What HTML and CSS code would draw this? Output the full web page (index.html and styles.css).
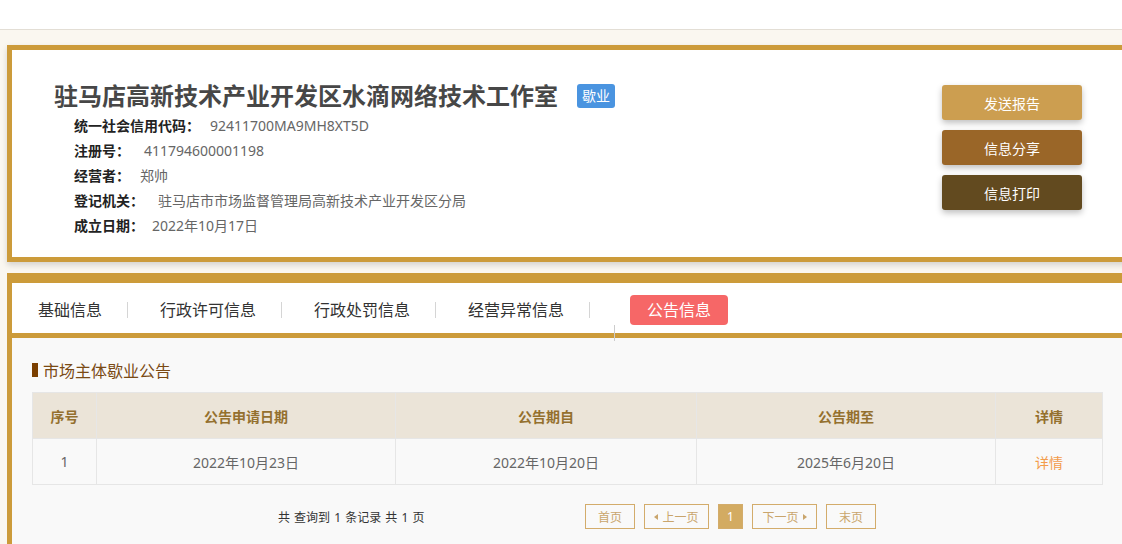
FILE: index.html
```html
<!DOCTYPE html>
<html lang="zh-CN">
<head>
  <meta charset="UTF-8">
  <meta name="viewport" content="width=device-width, initial-scale=1.0">
  <title>企业信息公示</title>
  <link rel="stylesheet" href="styles.css">
</head>
<body>
  <div class="topbar"></div>
  <div class="page">
    <div class="card info-card">
      <div class="info-main">
        <h1 class="company">驻马店高新技术产业开发区水滴网络技术工作室<span class="badge">歇业</span></h1>
        <ul class="facts">
          <li><b>统一社会信用代码：</b><span class="val">92411700MA9MH8XT5D</span></li>
          <li><b>注册号：</b><span class="val wide">411794600001198</span></li>
          <li><b>经营者：</b><span class="val">郑帅</span></li>
          <li><b>登记机关：</b><span class="val wide">驻马店市市场监督管理局高新技术产业开发区分局</span></li>
          <li><b>成立日期：</b><span class="val narrow">2022年10月17日</span></li>
        </ul>
      </div>
      <div class="actions">
        <button class="btn btn-send">发送报告</button>
        <button class="btn btn-share">信息分享</button>
        <button class="btn btn-print">信息打印</button>
      </div>
    </div>

    <div class="card detail-card">
      <div class="tabs">
        <a class="tab first">基础信息</a>
        <a class="tab">行政许可信息</a>
        <a class="tab">行政处罚信息</a>
        <a class="tab">经营异常信息</a>
        <a class="tab active">公告信息</a>
      </div>
      <div class="panel">
        <h2 class="section-title">市场主体歇业公告</h2>
        <table class="notice-table">
          <colgroup>
            <col style="width: 64px">
            <col style="width: 299px">
            <col style="width: 301px">
            <col style="width: 299px">
            <col style="width: 107px">
          </colgroup>
          <thead>
            <tr>
              <th>序号</th>
              <th>公告申请日期</th>
              <th>公告期自</th>
              <th>公告期至</th>
              <th>详情</th>
            </tr>
          </thead>
          <tbody>
            <tr>
              <td>1</td>
              <td>2022年10月23日</td>
              <td>2022年10月20日</td>
              <td>2025年6月20日</td>
              <td><a class="detail-link">详情</a></td>
            </tr>
          </tbody>
        </table>
        <div class="pager">
          <span class="pager-info">共 查询到 1 条记录 共 1 页</span>
          <div class="pager-links">
            <a class="page-btn w50">首页</a>
            <a class="page-btn w65"><i class="tri tri-left"></i>上一页</a>
            <a class="page-btn current">1</a>
            <a class="page-btn w65">下一页<i class="tri tri-right"></i></a>
            <a class="page-btn w50">末页</a>
          </div>
        </div>
      </div>
    </div>
  </div>
</body>
</html>
```

FILE: styles.css
```css
html, body {
  overflow: hidden;
}
body {
  margin: 0;
  font-family: "Noto Sans", "Noto Sans CJK SC", sans-serif;
  background-color: #faf7f0;
  color: #333;
}
.topbar {
  height: 29px;
  background-color: #fff;
  border-bottom: 1px solid #e3ded5;
}
.page {
  width: 1200px;
  margin-left: 7px;
  padding-top: 15px;
}
.card {
  box-sizing: border-box;
  border: 5px solid #cc9b3a;
}

/* fiche entreprise */
.info-card {
  display: flex;
  height: 217px;
  background-color: #fff;
  box-shadow: 0 3px 6px rgba(0, 0, 0, 0.15);
}
.info-main {
  box-sizing: border-box;
  flex: 0 0 930px;
  padding: 30px 0 0 42px;
}
.company {
  display: flex;
  align-items: center;
  margin: 0;
  height: 32px;
  line-height: 32px;
  font-size: 24px;
  font-weight: bold;
  color: #474747;
}
.badge {
  margin-left: 19px;
  width: 38px;
  height: 24px;
  line-height: 24px;
  text-align: center;
  font-size: 14px;
  font-weight: normal;
  color: #fff;
  background-color: #4a94e0;
  border-radius: 3px;
}
.facts {
  list-style: none;
  margin: 1px 0 0;
  padding-left: 20px;
}
.facts li {
  height: 25px;
  line-height: 25px;
  font-size: 14px;
}
.facts b {
  color: #222;
}
.val {
  margin-left: 10px;
  color: #666;
}
.val.wide { margin-left: 14px; }
.val.narrow { margin-left: 8px; }
.actions {
  display: flex;
  flex-direction: column;
  gap: 10px;
  padding-top: 35px;
}
.btn {
  width: 140px;
  height: 35px;
  border: 0;
  border-radius: 3px;
  font-family: inherit;
  font-size: 14px;
  color: #fff;
  box-shadow: 0 3px 6px rgba(0, 0, 0, 0.25);
}
.btn-send { background-color: #cc9e50; }
.btn-share { background-color: #9a6628; }
.btn-print { background-color: #624a1f; }

/* onglets */
.detail-card {
  margin-top: 11px;
  border-top-width: 10px;
  border-bottom: 0;
  background-color: #f9f9f9;
}
.tabs {
  display: flex;
  align-items: center;
  height: 47px;
  padding-top: 3px;
  background-color: #fff;
  border-bottom: 5px solid #cc9b3a;
}
.tab {
  padding: 0 25px 0 32px;
  line-height: 16px;
  font-size: 16px;
  color: #333;
  border-right: 1px solid #d5d5d5;
}
.tab.first { padding-left: 26px; }
.tab.active {
  position: relative;
  margin-left: 40px;
  padding: 0 17px;
  line-height: 30px;
  color: #fff;
  background-color: #f66767;
  border-right: 0;
  border-radius: 4px;
}
.tab.active::after {
  content: "";
  position: absolute;
  left: -16px;
  top: 30px;
  width: 1px;
  height: 16px;
  background-color: #ccc;
}

/* contenu */
.panel {
  padding-top: 20px;
}
.section-title {
  display: flex;
  align-items: center;
  margin: 0 0 10px 20px;
  height: 24px;
  font-size: 16px;
  font-weight: normal;
  color: #7a4a14;
}
.section-title::before {
  content: "";
  width: 6px;
  height: 14px;
  margin-right: 5px;
  background-color: #7b3f00;
}
.notice-table {
  width: 1070px;
  margin-left: 20px;
  border-collapse: collapse;
  table-layout: fixed;
  font-size: 14px;
}
.notice-table th,
.notice-table td {
  height: 45px;
  padding: 0;
  text-align: center;
  border: 1px solid #e6e6e6;
}
.notice-table th {
  background-color: #ebe4d8;
  color: #94702e;
  font-weight: bold;
}
.notice-table td {
  color: #666;
}
.detail-link {
  color: #f39c4b;
}
.pager {
  display: flex;
  align-items: center;
  margin-top: 19px;
  padding: 0 0 15px 266px;
  border-bottom: 1px solid #e8e8e8;
  font-size: 12px;
}
.pager-info {
  width: 307px;
  color: #333;
  word-spacing: 1px;
}
.pager-links {
  display: flex;
  gap: 9px;
}
.page-btn {
  box-sizing: border-box;
  display: flex;
  align-items: center;
  justify-content: center;
  height: 25px;
  border: 1px solid #d3ac6b;
  color: #c9a56c;
}
.page-btn.w50 { width: 50px; }
.page-btn.w65 { width: 65px; }
.page-btn.current {
  width: 25px;
  color: #fff;
  background-color: #d3ab62;
}
.tri {
  width: 0;
  height: 0;
  border-top: 3px solid transparent;
  border-bottom: 3px solid transparent;
}
.tri-left {
  margin-right: 4px;
  border-right: 4px solid #c9a56c;
}
.tri-right {
  margin-left: 4px;
  border-left: 4px solid #c9a56c;
}
```
